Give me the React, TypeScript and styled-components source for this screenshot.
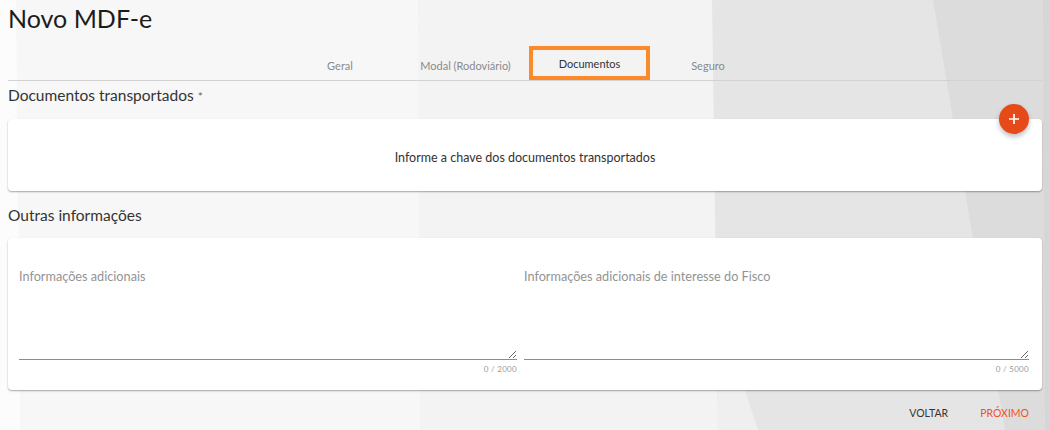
import React from "react";
import styled, { createGlobalStyle } from "styled-components";

const GlobalStyle = createGlobalStyle`
  html, body {
    margin: 0;
    padding: 0;
    background: #f7f7f7;
  }
  body {
    font-family: Lato, "Noto Sans", Arial, sans-serif;
    color: #333;
  }
  * { box-sizing: border-box; }
`;

const Page = styled.div`
  position: relative;
  min-height: 430px;
  overflow: hidden;
`;

const Backdrop = styled.svg`
  position: absolute;
  inset: 0;
  width: 100%;
  height: 100%;
  z-index: 0;
`;

const Content = styled.div`
  position: relative;
  z-index: 1;
  padding: 0 8px;
`;

const Title = styled.h1`
  margin: 0;
  padding-top: 2px;
  font-size: 25px;
  line-height: 32px;
  font-weight: 400;
  color: #1c1c1c;
`;

const TabBar = styled.div`
  margin-top: 12px;
  display: flex;
  justify-content: center;
  padding-right: 6px;
  border-bottom: 1px solid #d2d2d2;
  height: 35px;
`;

const Tab = styled.div<{ $active?: boolean; $width: number }>`
  width: ${(p) => p.$width}px;
  display: flex;
  align-items: center;
  justify-content: center;
  font-size: 11px;
  color: ${(p) => (p.$active ? "#333" : "#8a8a8a")};
  border: 4px solid ${(p) => (p.$active ? "#fb8a2c" : "transparent")};
  border-bottom-width: ${(p) => (p.$active ? "4px" : "0")};
`;

const SectionTitle = styled.h2<{ $top: number }>`
  margin: ${(p) => p.$top}px 0 0;
  font-size: 15.5px;
  line-height: 20px;
  font-weight: 400;
  color: #333;
`;

const Required = styled.span`
  font-size: 12px;
  color: #666;
  margin-left: 4px;
`;

const Card = styled.div<{ $top: number; $height: number }>`
  position: relative;
  margin-top: ${(p) => p.$top}px;
  height: ${(p) => p.$height}px;
  background: #fff;
  border-radius: 4px;
  box-shadow: 0 1px 2px rgba(0, 0, 0, 0.28), 0 1px 1px rgba(0, 0, 0, 0.08);
`;

const EmptyText = styled.div`
  height: 100%;
  display: flex;
  align-items: center;
  justify-content: center;
  font-size: 12.5px;
  color: #333;
  padding-top: 4px;
`;

const Fab = styled.button`
  position: absolute;
  top: -15px;
  right: 13px;
  width: 30px;
  height: 30px;
  border-radius: 50%;
  border: none;
  padding: 0;
  background: #e64a19;
  box-shadow: 0 3px 5px rgba(0, 0, 0, 0.25);
  display: flex;
  align-items: center;
  justify-content: center;
`;

const FieldRow = styled.div`
  display: grid;
  grid-template-columns: 498px 505px;
  column-gap: 7px;
  padding: 30px 0 0 11px;
`;

const Field = styled.div`
  display: flex;
  flex-direction: column;
`;

const FieldLabel = styled.label`
  font-size: 12.7px;
  color: #939393;
  line-height: 16px;
`;

const TextArea = styled.textarea`
  margin-top: 2px;
  height: 74px;
  border: none;
  border-bottom: 1px solid #8c8c8c;
  background: transparent;
  font-family: inherit;
  font-size: 12px;
  outline: none;
  padding: 0;
  resize: vertical;
`;

const Counter = styled.div`
  align-self: flex-end;
  margin-top: 4px;
  font-size: 8px;
  letter-spacing: 0.3px;
  color: #9a9a9a;
`;

const Actions = styled.div`
  display: flex;
  justify-content: flex-end;
  gap: 32px;
  margin-top: 17px;
  padding-right: 13px;
`;

const ActionButton = styled.button<{ $primary?: boolean }>`
  background: none;
  border: none;
  padding: 0;
  font-family: inherit;
  font-size: 10.5px;
  text-transform: uppercase;
  color: ${(p) => (p.$primary ? "#f0521e" : "#333")};
`;

const tabs = [
  { label: "Geral", width: 124 },
  { label: "Modal (Rodoviário)", width: 127 },
  { label: "Documentos", width: 121 },
  { label: "Seguro", width: 116 },
];

export default function App() {
  return (
    <>
      <GlobalStyle />
      <Page>
        <Backdrop viewBox="0 0 1050 430" preserveAspectRatio="none">
          <rect x="0" y="0" width="1050" height="430" fill="#f7f7f7" />
          <polygon points="0,0 16,0 20,430 0,430" fill="#fcfcfc" />
          <polygon points="418,0 712,0 718,430 420,430" fill="#f3f3f3" />
          <polygon points="712,0 1050,0 1050,430 718,430" fill="#e5e5e5" />
          <polygon points="718,390 745,390 758,430 718,430" fill="#efefef" />
          <polygon points="933,0 1050,0 1050,430 1005,430" fill="#dcdcdc" />
          <polygon points="1043,0 1050,0 1050,430 1045,430" fill="#d6d6d6" />
        </Backdrop>
        <Content>
          <Title>Novo MDF-e</Title>
          <TabBar>
            {tabs.map((t) => (
              <Tab key={t.label} $width={t.width} $active={t.label === "Documentos"}>
                {t.label}
              </Tab>
            ))}
          </TabBar>
          <SectionTitle $top={4}>
            Documentos transportados<Required>*</Required>
          </SectionTitle>
          <Card $top={12} $height={72}>
            <Fab aria-label="Adicionar">
              <svg width="12" height="12" viewBox="0 0 12 12">
                <path d="M6 1v10M1 6h10" stroke="#fff" strokeWidth="1.7" />
              </svg>
            </Fab>
            <EmptyText>Informe a chave dos documentos transportados</EmptyText>
          </Card>
          <SectionTitle $top={14}>Outras informações</SectionTitle>
          <Card $top={13} $height={152}>
            <FieldRow>
              <Field>
                <FieldLabel>Informações adicionais</FieldLabel>
                <TextArea />
                <Counter>0 / 2000</Counter>
              </Field>
              <Field>
                <FieldLabel>Informações adicionais de interesse do Fisco</FieldLabel>
                <TextArea />
                <Counter>0 / 5000</Counter>
              </Field>
            </FieldRow>
          </Card>
          <Actions>
            <ActionButton>Voltar</ActionButton>
            <ActionButton $primary>Próximo</ActionButton>
          </Actions>
        </Content>
      </Page>
    </>
  );
}
